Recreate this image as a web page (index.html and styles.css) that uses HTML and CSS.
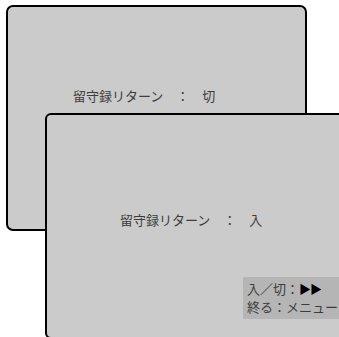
FILE: index.html
```html
<!DOCTYPE html>
<html lang="ja">
<head>
<meta charset="utf-8">
<link rel="stylesheet" href="styles.css">
</head>
<body>
<div class="desk">
  <div class="panel panel-back">
    <div class="setting setting-back">留守録リターン　：　切</div>
  </div>
  <div class="panel panel-front">
    <div class="setting setting-front">留守録リターン　：　入</div>
    <div class="help">
      <div class="help-line">入／切：<span class="ff">▶▶</span></div>
      <div class="help-line">終る：メニュー</div>
    </div>
  </div>
</div>
</body>
</html>
```
FILE: styles.css
```css
html, body {
  margin: 0;
  padding: 0;
  background: #ffffff;
  overflow: hidden;
}
.desk {
  position: relative;
  width: 339px;
  height: 337px;
  overflow: hidden;
  font-family: "Noto Sans CJK JP", "Noto Sans", sans-serif;
  color: #3c3c3c;
  font-size: 13px;
}
.panel {
  box-sizing: border-box;
  background: #cbcbcb;
  border: 2px solid #000;
}
.panel-back {
  margin: 5px 0 0 6px;
  width: 301px;
  height: 226px;
  border-radius: 7px;
  padding: 80px 0 0 65px;
}
.panel-front {
  position: absolute;
  left: 45px;
  top: 113px;
  width: 310px;
  height: 226px;
  border-radius: 6px;
  padding: 96px 0 0 0;
  display: flex;
  flex-direction: column;
}
.setting {
  line-height: 18px;
  white-space: nowrap;
}
.setting-front {
  margin-left: 73px;
}
.help {
  margin: 48px 0 0 196px;
  background: #b5b5b5;
  padding: 3px 0 3px 4px;
  line-height: 18px;
  white-space: nowrap;
}
.help-line {
  height: 18px;
}
.ff {
  color: #000;
  font-size: 12px;
  letter-spacing: -1px;
}
```
